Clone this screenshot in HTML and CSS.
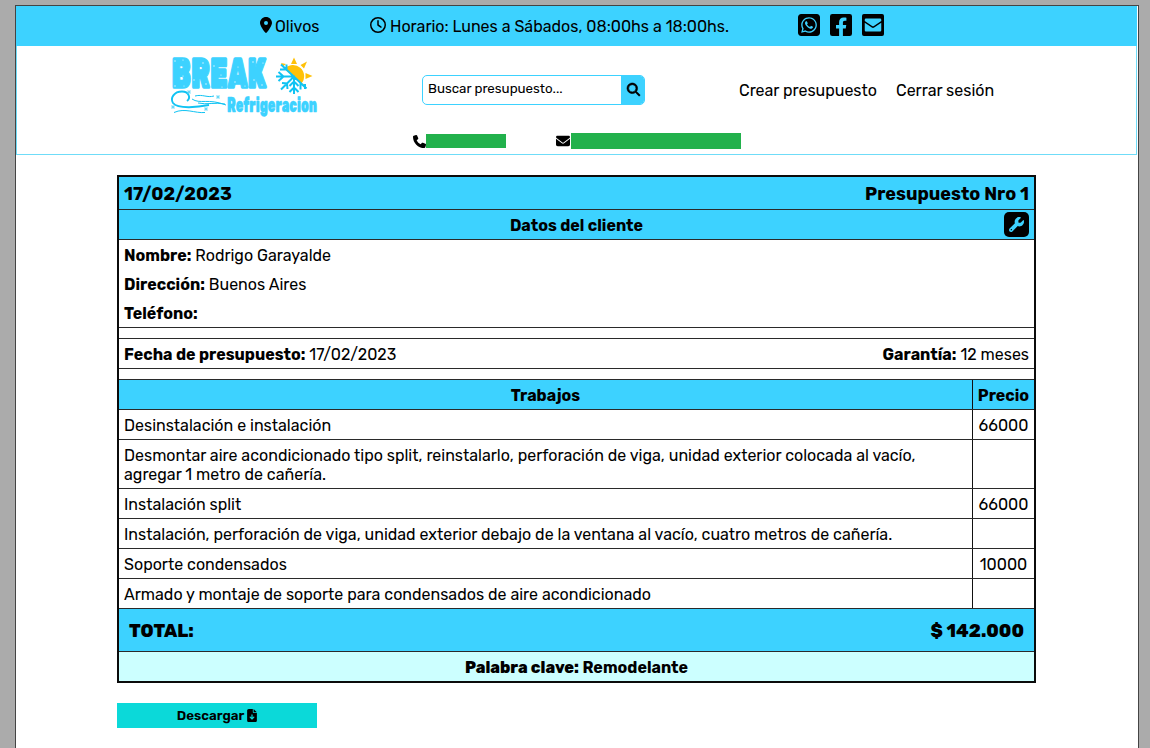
FILE: index.html
```html
<!DOCTYPE html>
<html lang="es">
<head>
<meta charset="utf-8">
<title>Break Refrigeracion - Presupuesto</title>
<link rel="stylesheet" href="styles.css">
</head>
<body>
<div class="page">
  <header class="header">
    <div class="topbar">
      <div class="place"><svg class="ico-pin" viewBox="0 0 384 512"><path d="M215.7 499.2C267 435 384 279.4 384 192C384 86 298 0 192 0S0 86 0 192c0 87.4 117 243 168.3 307.2c12.3 15.3 35.1 15.3 47.4 0zM192 128a64 64 0 1 1 0 128 64 64 0 1 1 0-128z"/></svg><span class="t-olivos">Olivos</span></div>
      <div class="hours"><svg class="ico16" viewBox="0 0 512 512"><path d="M464 256A208 208 0 1 1 48 256a208 208 0 1 1 416 0zM0 256a256 256 0 1 0 512 0A256 256 0 1 0 0 256zM232 120V256c0 8 4 15.5 10.7 20l96 64c11 7.4 25.9 4.4 33.3-6.7s4.4-25.9-6.7-33.3L280 243.2V120c0-13.3-10.7-24-24-24s-24 10.7-24 24z"/></svg><span class="t-hours">Horario: Lunes a Sábados, 08:00hs a 18:00hs.</span></div>
      <div class="social">
        <svg viewBox="0 32 448 448"><path d="M92.1 254.6c0 24.9 7 49.2 20.2 70.1l3.1 5-13.3 48.6L152 365.2l4.8 2.9c20.2 12 43.4 18.4 67.1 18.4h.1c72.6 0 133.3-59.1 133.3-131.8c0-35.2-15.2-68.3-40.1-93.2c-25-25-58-38.7-93.2-38.7c-72.7 0-131.8 59.1-131.9 131.8zM274.8 330c-12.6 1.9-22.4 .9-47.5-9.9c-36.8-15.9-61.8-51.5-66.9-58.7c-.4-.6-.7-.9-.8-1.1c-2-2.6-16.2-21.5-16.2-41c0-18.4 9-27.9 13.2-32.3c.3-.3 .5-.5 .7-.8c3.6-4 7.9-5 10.6-5c2.6 0 5.3 0 7.6 .1c.3 0 .5 0 .8 0c2.3 0 5.2 0 8.1 6.8c1.2 2.9 3 7.3 4.9 11.8c3.3 8 6.7 16.3 7.3 17.6c1 2 1.7 4.3 .3 6.9c-3.4 6.8-6.9 10.4-9.3 13c-3.1 3.2-4.5 4.7-2.3 8.6c15.3 26.3 30.6 35.4 53.9 47.1c4 2 6.3 1.7 8.6-1c2.3-2.6 9.9-11.6 12.5-15.5c2.6-4 5.3-3.3 8.9-2s23.1 10.9 27.1 12.9c.8 .4 1.5 .7 2.1 1c2.8 1.4 4.7 2.3 5.5 3.6c.9 1.9 .9 9.9-2.4 19.1c-3.3 9.3-19.1 17.7-26.7 18.8zM448 96c0-35.3-28.7-64-64-64H64C28.7 32 0 60.7 0 96V416c0 35.3 28.7 64 64 64H384c35.3 0 64-28.7 64-64V96zM148.1 393.9L64 416l22.5-82.2c-13.9-24-21.2-51.3-21.2-79.3C65.4 167.1 136.5 96 223.9 96c42.4 0 82.2 16.5 112.2 46.5c29.9 30 47.9 69.8 47.9 112.2c0 87.4-72.7 158.5-160.1 158.5c-26.6 0-52.7-6.7-75.8-19.3z"/></svg>
        <svg viewBox="0 32 448 448"><path d="M400 32H48A48 48 0 0 0 0 80v352a48 48 0 0 0 48 48h137.25V327.69h-63V256h63v-54.64c0-62.15 37-96.48 93.67-96.48 27.14 0 55.52 4.84 55.52 4.84v61h-31.27c-30.81 0-40.42 19.12-40.42 38.73V256h68.78l-11 71.69h-57.78V480H400a48 48 0 0 0 48-48V80a48 48 0 0 0-48-48z"/></svg>
        <svg viewBox="0 32 448 448"><rect y="32" width="448" height="448" rx="40"/><path class="sky" d="M80 124H368a24 24 0 0 1 24 24v24L242 276q-18 12-36 0L56 172v-24a24 24 0 0 1 24-24zM56 208L200 308q24 16 48 0L392 208V364a24 24 0 0 1-24 24H80a24 24 0 0 1-24-24z"/></svg>
      </div>
    </div>
    <div class="mainbar">
      <svg class="logo" viewBox="0 0 150 64">
        <text class="brand" x="1.500" y="33" textLength="95" lengthAdjust="spacingAndGlyphs">BREAK</text>
        <g class="flecks">
          <circle cx="5" cy="6" r=".7"/><circle cx="13" cy="5" r=".6"/><circle cx="5" cy="31" r=".7"/><circle cx="13" cy="21" r=".6"/><circle cx="14" cy="31" r=".5"/><circle cx="24" cy="25" r=".7"/><circle cx="33" cy="8" r=".7"/><circle cx="36" cy="29" r=".7"/><circle cx="44" cy="11" r=".7"/><circle cx="51" cy="20" r=".6"/><circle cx="52" cy="32" r=".6"/><circle cx="68" cy="12" r=".6"/><circle cx="65" cy="27" r=".7"/><circle cx="75" cy="31" r=".6"/><circle cx="83" cy="7" r=".7"/><circle cx="84" cy="25" r=".7"/><circle cx="93" cy="8" r=".6"/><circle cx="92" cy="30" r=".7"/>
        </g>
        <g class="sun">
          <path d="M114.500 14A10 10 0 1 1 131.500 28.500Z"/>
          <path d="M121 9l3-6.500L127 9zM130.500 10l6.500-3.500L134 13.500zM135.500 18l7 3-7 3zM133 28.500l4 5-5.500-4zM111 8l5 1-3 2.500z"/>
        </g>
        <g class="ice">
          <path d="M111 9.500l25.500 24M106 21.500h18V39M124 21.500L111 34.500M108.500 17l5 4.500-5 4.500M110 14.500h6.500V9.500M112 28l5 .500.500 5.500M119.500 37l4.500-4.500 4.500 4.500M119.500 31l4.500-4.500 4.500 4.500M130.500 28v6.500M135 29v5"/>
        </g>
        <g class="wind">
          <path class="thick" d="M17 46c4-3 2-9.500-5-9.500C4 36.500 0 43 3 48c5 6.500 26 4 36 2"/>
          <path d="M4 57.500c11-5 21 1 31 0M22 44c8 5.500 16-1 34 6M25 41c8-2 12 2 19 0M28 48c9 2 17-1 27 1"/>
          <path class="flake" d="M17 37h4M19 35v4M17.500 35.500l3 3M20.500 35.500l-3 3M46 42h4M48 40v4M46.500 40.500l3 3M49.500 40.500l-3 3M1 52h4M3 50v4M1.500 50.500l3 3M4.500 50.500l-3 3M34 54h4M36 52v4M34.500 52.500l3 3M37.500 52.500l-3 3"/>
        </g>
        <text class="tag" x="57" y="57" textLength="90" lengthAdjust="spacingAndGlyphs">Refrigeracion</text>
      </svg>
      <div class="search">
        <span class="search-text">Buscar presupuesto...</span>
        <span class="search-btn"><svg viewBox="0 0 512 512"><path d="M416 208c0 45.9-14.9 88.3-40 122.7L502.6 457.4c12.5 12.5 12.5 32.8 0 45.3s-32.8 12.5-45.3 0L330.7 376c-34.4 25.2-76.8 40-122.7 40C93.1 416 0 322.9 0 208S93.1 0 208 0S416 93.1 416 208zM208 352a144 144 0 1 0 0-288 144 144 0 1 0 0 288z"/></svg></span>
      </div>
      <nav class="nav"><a class="nav-create">Crear presupuesto</a><a class="nav-exit">Cerrar sesión</a></nav>
    </div>
    <div class="contact">
      <svg class="ico13" viewBox="0 0 512 512"><path d="M164.9 24.6c-7.700-18.600-28-28.500-47.400-23.200l-88 24C12.100 30.200 0 46 0 64C0 311.400 200.600 512 448 512c18 0 33.800-12.100 38.600-29.500l24-88c5.300-19.400-4.600-39.700-23.200-47.400l-96-40c-16.300-6.800-35.200-2.100-46.300 11.600L304.700 368C234.300 334.700 177.300 277.700 144 207.300L193.300 167c13.700-11.200 18.400-30 11.600-46.300l-40-96z"/></svg>
      <span class="mask-phone"></span>
      <svg class="ico-mail" viewBox="0 0 512 512"><path d="M48 64C21.500 64 0 85.500 0 112c0 15.100 7.100 29.300 19.200 38.400L236.800 313.600c11.400 8.500 27 8.500 38.400 0L492.800 150.400c12.100-9.100 19.200-23.300 19.200-38.400c0-26.500-21.500-48-48-48H48zM0 176V384c0 35.300 28.700 64 64 64H448c35.300 0 64-28.700 64-64V176L294.400 339.200c-22.800 17.100-54 17.100-76.800 0L0 176z"/></svg>
      <span class="mask-mail"></span>
    </div>
  </header>

  <main class="sheet">
    <div class="row title"><span class="t-date">17/02/2023</span><span class="t-num">Presupuesto Nro 1</span></div>
    <div class="row section">
      <span class="t-client">Datos del cliente</span>
      <span class="tool"><svg viewBox="0 0 512 512"><path d="M352 320c88.400 0 160-71.600 160-160c0-15.300-2.200-30.100-6.200-44.200c-3.100-10.800-16.400-13.200-24.300-5.300l-76.800 76.800c-3 3-7.100 4.700-11.300 4.700H336c-8.800 0-16-7.200-16-16V118.600c0-4.200 1.700-8.300 4.700-11.300l76.800-76.800c7.900-7.900 5.400-21.200-5.300-24.300C382.100 2.200 367.300 0 352 0C263.600 0 192 71.600 192 160c0 19.100 3.400 37.500 9.500 54.500L19.900 396.100C7.200 408.800 0 426.100 0 444.100C0 481.600 30.400 512 67.900 512c18 0 35.300-7.200 48-19.900L297.500 310.500c17 6.200 35.400 9.500 54.500 9.500zM80 408a24 24 0 1 1 0 48 24 24 0 1 1 0-48z"/></svg></span>
    </div>
    <div class="client">
      <div class="field"><b>Nombre:</b> <span>Rodrigo Garayalde</span></div>
      <div class="field"><b>Dirección:</b> <span>Buenos Aires</span></div>
      <div class="field"><b>Teléfono:</b></div>
    </div>
    <div class="spacer"></div>
    <div class="row dates"><div><b>Fecha de presupuesto:</b> <span class="num">17/02/2023</span></div><div><b class="t-gar">Garantía:</b> <span>12 meses</span></div></div>
    <div class="spacer"></div>
    <div class="item head"><div class="work">Trabajos</div><div class="price">Precio</div></div>
    <div class="item"><div class="work">Desinstalación e instalación</div><div class="price">66000</div></div>
    <div class="item tall"><div class="work">Desmontar aire acondicionado tipo split, reinstalarlo, perforación de viga, unidad exterior colocada al vacío,<br>agregar 1 metro de cañería.</div><div class="price"></div></div>
    <div class="item"><div class="work">Instalación split</div><div class="price">66000</div></div>
    <div class="item"><div class="work">Instalación, perforación de viga, unidad exterior debajo de la ventana al vacío, cuatro metros de cañería.</div><div class="price"></div></div>
    <div class="item"><div class="work">Soporte condensados</div><div class="price">10000</div></div>
    <div class="item"><div class="work">Armado y montaje de soporte para condensados de aire acondicionado</div><div class="price"></div></div>
    <div class="row total"><span class="t-total">TOTAL:</span><span class="t-sum">$ 142.000</span></div>
    <div class="key"><span class="k1">Palabra clave:</span> <span class="k2">Remodelante</span></div>
  </main>

  <button class="download"><span>Descargar</span><svg viewBox="0 0 384 512"><path d="M64 0C28.700 0 0 28.700 0 64V448c0 35.300 28.700 64 64 64H320c35.300 0 64-28.700 64-64V160H256c-17.700 0-32-14.300-32-32V0H64zM256 0V128H384L256 0zM216 232V334.100l31-31c9.400-9.400 24.600-9.400 33.900 0s9.400 24.600 0 33.900l-72 72c-9.400 9.400-24.600 9.400-33.900 0l-72-72c-9.400-9.400-9.400-24.600 0-33.900s24.600-9.400 33.900 0l31 31V232c0-13.300 10.700-24 24-24s24 10.700 24 24z"/></svg></button>
</div>
</body>
</html>
```
FILE: styles.css
```css
* { box-sizing: border-box; }
body {
  margin: 0;
  padding: 5px 11px 0 15px;
  height: 748px;
  overflow: hidden;
  background: #ababab;
  font: 16px/19px Rubik, Roboto, sans-serif;
  color: #000;
}
svg { display: block; flex: none; }
b { font-weight: 700; }
.page {
  height: 760px;
  background: #fff;
  border: 1px solid #444;
}
.header {
  height: 149px;
  margin-right: 1px;
  border: 1px solid #6fdcf8;
  border-top: 0;
}
.topbar {
  display: flex;
  align-items: center;
  height: 40px;
  margin: 0 -1px;
  padding-left: 244px;
  background: #3dd2ff;
}
.place { display: flex; align-items: center; width: 110px; gap: 3px; }
.hours { display: flex; align-items: center; width: 428px; gap: 4px; }
.ico-pin { width: 12px; height: 16px; margin-top: -2px; }
.ico16 { width: 16px; height: 16px; margin-top: -2px; }
.social { display: flex; gap: 10px; }
.social svg { width: 22px; height: 22px; margin-top: -2px; }
.sky { fill: #3dd2ff; }
.mainbar { display: flex; height: 84px; padding: 9px 0 0 153px; }
.logo { width: 150px; height: 64px; overflow: visible; }
.brand {
  font: 900 43px/1 Rubik, Roboto, sans-serif;
  fill: #3dd2ff;
  stroke: #3dd2ff;
  stroke-width: 1.6px;
}
.tag {
  font: 900 20px/1 Rubik, Roboto, sans-serif;
  fill: #3dd2ff;
  stroke: #3dd2ff;
  stroke-width: 0.3px;
}
.flecks { fill: #e8faff; }
.sun { fill: #ffc107; }
.ice { fill: none; stroke: #10c3f3; stroke-width: 2px; }
.wind { fill: none; stroke: #10c3f3; stroke-width: 1px; }
.thick { stroke-width: 1.9px; }
.flake { stroke: #5dd5f8; stroke-width: 0.8px; }
.search {
  display: flex;
  width: 223px;
  height: 30px;
  margin: 20px 0 0 102px;
  border: 1px solid #3dd2ff;
  border-radius: 5px;
  overflow: hidden;
}
.search-text {
  flex: 1;
  padding: 3px 0 0 5px;
  font-size: 13.333px;
}
.search-btn {
  display: flex;
  align-items: center;
  justify-content: center;
  width: 23px;
  padding: 0 0 1px 1px;
  background: #3dd2ff;
}
.search-btn svg { width: 13px; height: 13px; stroke: #000; stroke-width: 24; overflow: visible; }
.nav { display: flex; margin: 26px 0 0 94px; }
.nav-create { width: 157px; }
.contact { display: flex; align-items: center; padding-left: 396px; height: 24px; margin-top: -1px; }
.ico13 { width: 13px; height: 13px; }
.mask-phone { width: 80px; height: 14px; background: #22b14c; }
.ico-mail { width: 14px; height: 14px; margin: 0 1px 0 50px; }
.mask-mail { width: 170px; height: 16px; background: #22b14c; }

.sheet {
  width: 919px;
  height: 508px;
  margin: 20px 0 0 101px;
  border: 2px solid #0b0b0b;
}
.row {
  display: flex;
  align-items: center;
  justify-content: space-between;
  height: 30px;
  padding: 1px 5px 0;
  border-bottom: 1px solid #2a2a2a;
}
.title { height: 33px; padding-top: 2px; background: #3dd2ff; font-size: 18px; font-weight: 700; }
.section { position: relative; justify-content: center; background: #3dd2ff; font-weight: 700; }
.tool {
  position: absolute;
  right: 5px;
  top: 2px;
  padding: 5px;
  width: 25px;
  height: 25px;
  border-radius: 5px;
  background: #000;
}
.tool svg { width: 15px; height: 15px; fill: #3dd2ff; }
.client { height: 88px; padding: 1px 5px 0; border-bottom: 1px solid #2a2a2a; }
.field { height: 29px; padding-top: 5px; }
.spacer { height: 11px; border-bottom: 1px solid #2a2a2a; }
.item { display: flex; height: 30px; border-bottom: 1px solid #2a2a2a; }
.tall { height: 49px; }
.work { flex: 1; padding: 6px 0 0 5px; white-space: nowrap; }
.price { width: 62px; padding-top: 6px; border-left: 1px solid #111; text-align: center; }
.head { background: #3dd2ff; font-weight: 700; }
.head .work { padding-left: 0; text-align: center; }
.total { height: 43px; padding: 3px 10px 0; background: #3dd2ff; font-size: 18px; font-weight: 800; }
.key { height: 29px; padding-top: 6px; background: #cff; font-weight: 700; text-align: center; }
.k1 { font-weight: 800; }
.download {
  display: flex;
  align-items: center;
  justify-content: center;
  gap: 3px;
  width: 200px;
  height: 25px;
  margin: 20px 0 0 101px;
  padding: 0;
  border: 0;
  background: #0bd9d9;
  color: #000;
  font: 600 13.333px Rubik, Roboto, sans-serif;
}
.download svg { width: 10px; height: 13px; }
```
